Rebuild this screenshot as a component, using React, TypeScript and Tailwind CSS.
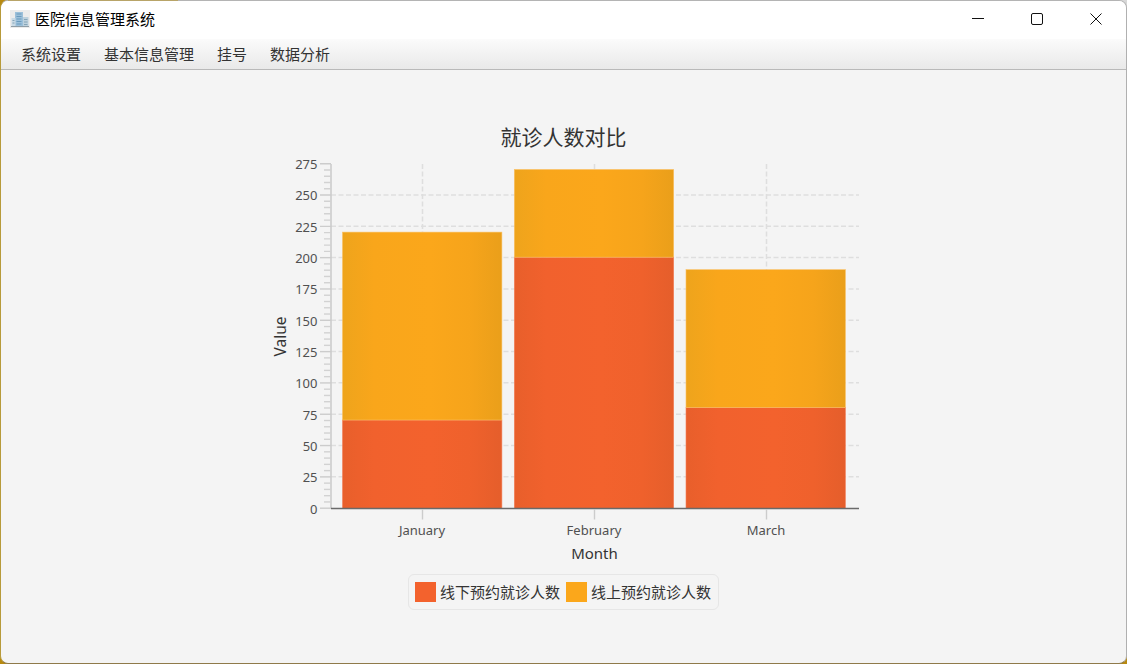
const font = "font-['Noto_Sans','Noto_Sans_CJK_SC',sans-serif]";

const menus = ["系统设置", "基本信息管理", "挂号", "数据分析"];
const yTicks = Array.from({ length: 12 }, (_, i) => i * 25);
const minorTicks = Array.from({ length: 56 }, (_, i) => i * 5).filter((v) => v % 25 !== 0);

const bars = [
  { month: "January", x: 342.5, cx: 422.5, offline: 70, online: 150 },
  { month: "February", x: 514.3, cx: 594.5, offline: 200, online: 70 },
  { month: "March", x: 686, cx: 766.5, offline: 80, online: 110 },
];

const AXIS_Y = 508.5;
const BAR_W = 159.4;
const PLOT_L = 331;
const PLOT_R = 859;
const yOf = (v: number) => AXIS_Y - v * 1.2527;
const barY = (v: number) => yOf(v) - 0.8;

function BuildingIcon() {
  return (
    <svg width="20" height="18" viewBox="0 0 20 18" className="shrink-0">
      <rect width="20" height="18" fill="#ececec" />
      <rect x="5" y="2" width="8" height="14" fill="#9cc0da" />
      <rect x="1.5" y="8" width="4" height="8" fill="#c9dae5" />
      <rect x="13" y="7" width="5.5" height="9" fill="#bdd1dd" />
      <path d="M6.5 4h5M6.5 6.5h5M6.5 9h5M6.5 11.5h5M6.5 14h5" stroke="#6b9bbd" strokeWidth="1" />
      <path d="M14 9.5h3.5M14 12h3.5M14 14.5h3.5M2.5 10.5h2M2.5 13h2" stroke="#86a5b8" strokeWidth="1" />
      <path d="M1 16.5h18" stroke="#8f9da6" strokeWidth="1" />
    </svg>
  );
}

function WindowButtons() {
  return (
    <div className="mr-[1px] flex items-center">
      <button className="flex h-[36px] w-[59px] items-center justify-center">
        <svg width="12" height="12" viewBox="0 0 12 12">
          <path d="M0 5.5h12" stroke="#111" strokeWidth="1" />
        </svg>
      </button>
      <button className="flex h-[36px] w-[59px] items-center justify-center">
        <svg width="12" height="12" viewBox="0 0 12 12">
          <rect x="0.5" y="0.5" width="11" height="11" rx="1.5" fill="none" stroke="#111" strokeWidth="1" />
        </svg>
      </button>
      <button className="flex h-[36px] w-[59px] items-center justify-center">
        <svg width="12" height="12" viewBox="0 0 12 12">
          <path d="M0.5 0.5l11 11M11.5 0.5l-11 11" stroke="#111" strokeWidth="1" />
        </svg>
      </button>
    </div>
  );
}

function Chart() {
  return (
    <svg width="605" height="410" viewBox="261 155 605 410" className="mt-[4px] shrink-0">
      <defs>
        <linearGradient id="orangeBar" x1="0" x2="1" y1="0" y2="0">
          <stop offset="0" stopColor="#e85f2b" />
          <stop offset="0.2" stopColor="#f1612d" />
          <stop offset="0.55" stopColor="#f3622d" />
          <stop offset="0.8" stopColor="#ef612c" />
          <stop offset="1" stopColor="#e55e2b" />
        </linearGradient>
        <linearGradient id="yellowBar" x1="0" x2="1" y1="0" y2="0">
          <stop offset="0" stopColor="#eea41c" />
          <stop offset="0.2" stopColor="#f9a61b" />
          <stop offset="0.55" stopColor="#fba71b" />
          <stop offset="0.8" stopColor="#f6a41b" />
          <stop offset="1" stopColor="#ea9f1a" />
        </linearGradient>
      </defs>

      {/* grid */}
      {yTicks.slice(1, -1).map((v) => (
        <line key={v} x1={PLOT_L} x2={PLOT_R} y1={yOf(v) - 0.4} y2={yOf(v) - 0.4} stroke="#dedede" strokeWidth="1.5" strokeDasharray="5 2.5" />
      ))}
      {bars.map((b) => (
        <line key={b.month} x1={b.cx} x2={b.cx} y1={164} y2={AXIS_Y} stroke="#dedede" strokeWidth="1.5" strokeDasharray="5 2.5" />
      ))}

      {/* bars */}
      {bars.map((b) => (
        <g key={b.month}>
          <rect x={b.x} y={barY(b.offline)} width={BAR_W} height={AXIS_Y - barY(b.offline)} fill="url(#orangeBar)" stroke="#f4805a" strokeWidth="0.6" />
          <rect x={b.x} y={barY(b.offline + b.online)} width={BAR_W} height={barY(b.offline) - barY(b.offline + b.online)} fill="url(#yellowBar)" stroke="#fbc064" strokeWidth="0.6" />
        </g>
      ))}

      {/* y axis */}
      <line x1={PLOT_L} x2={PLOT_L} y1={164} y2={AXIS_Y} stroke="#cccccc" strokeWidth="1.6" />
      {yTicks.map((v) => (
        <line key={v} x1={320} x2={PLOT_L} y1={yOf(v) - 0.3} y2={yOf(v) - 0.3} stroke="#cccccc" strokeWidth="1.4" />
      ))}
      {minorTicks.map((v) => (
        <line key={v} x1={324} x2={PLOT_L} y1={yOf(v) - 0.3} y2={yOf(v) - 0.3} stroke="#d2d2d2" strokeWidth="1.4" />
      ))}
      {yTicks.map((v) => (
        <text key={v} x={317.5} y={yOf(v) + 5} textAnchor="end" fontSize="13" fill="#505050">
          {v}
        </text>
      ))}
      <text x={0} y={0} transform="translate(286 336.5) rotate(-90)" textAnchor="middle" fontSize="15.5" fill="#333">
        Value
      </text>

      {/* x axis */}
      <line x1={PLOT_L} x2={PLOT_R} y1={AXIS_Y} y2={AXIS_Y} stroke="#6a6a6a" strokeWidth="1.3" />
      {bars.map((b) => (
        <g key={b.month}>
          <line x1={b.cx} x2={b.cx} y1={509} y2={519.5} stroke="#cccccc" strokeWidth="1.4" />
          <text x={b.cx - 0.5} y={535} textAnchor="middle" fontSize="13" fill="#505050">
            {b.month}
          </text>
        </g>
      ))}
      <text x={594.5} y={559} textAnchor="middle" fontSize="15" fill="#333">
        Month
      </text>
    </svg>
  );
}

function Legend() {
  return (
    <div className="mt-[9px] flex h-[36px] w-[311px] items-center rounded-[6px] border border-[#e6e6e6] pl-[6px] text-[15px] text-[#333]">
      <span className="h-[20px] w-[21px] bg-[#f3622d]" />
      <span className="ml-[4px]">线下预约就诊人数</span>
      <span className="ml-[6px] h-[20px] w-[21px] bg-[#fba71b]" />
      <span className="ml-[4px]">线上预约就诊人数</span>
    </div>
  );
}

export default function App() {
  return (
    <div className={`relative h-[664px] w-[1127px] overflow-hidden bg-[#b8890f] ${font}`}>
      <span className="absolute right-0 top-0 h-[12px] w-[500px] bg-[#d8d8d8]" />
      <div className="relative flex h-full flex-col overflow-hidden rounded-[8px] border-b border-l border-r border-t border-b-[#8f7a4a] border-l-[#b79a3a] border-r-[#b0b0b0] border-t-[#b4b4b4] bg-[#f4f4f4]">
        <div className="flex h-[38px] shrink-0 items-center justify-between bg-white pb-[2px]">
          <div className="flex items-center pl-[9px]">
            <BuildingIcon />
            <span className="ml-[5px] text-[15px] text-black">医院信息管理系统</span>
          </div>
          <WindowButtons />
        </div>
        <nav className="flex h-[31px] shrink-0 items-center border-b border-[#b9b9b9] bg-gradient-to-b from-[#fbfbfb] to-[#e9e9e9] pl-[20px] text-[15px] text-[#333]">
          <span>{menus[0]}</span>
          <span className="ml-[23px]">{menus[1]}</span>
          <span className="ml-[23px]">{menus[2]}</span>
          <span className="ml-[23px]">{menus[3]}</span>
        </nav>
        <main className="flex flex-1 flex-col items-center pt-[53px]">
          <h1 className="h-[28px] text-[21px] font-normal leading-[28px] text-[#333]">就诊人数对比</h1>
          <Chart />
          <Legend />
        </main>
      </div>
      {/* wallpaper showing past the window's top edge */}
      <span className="absolute left-[8px] top-0 h-[1px] w-[170px] bg-[#b8a468]" />
    </div>
  );
}
